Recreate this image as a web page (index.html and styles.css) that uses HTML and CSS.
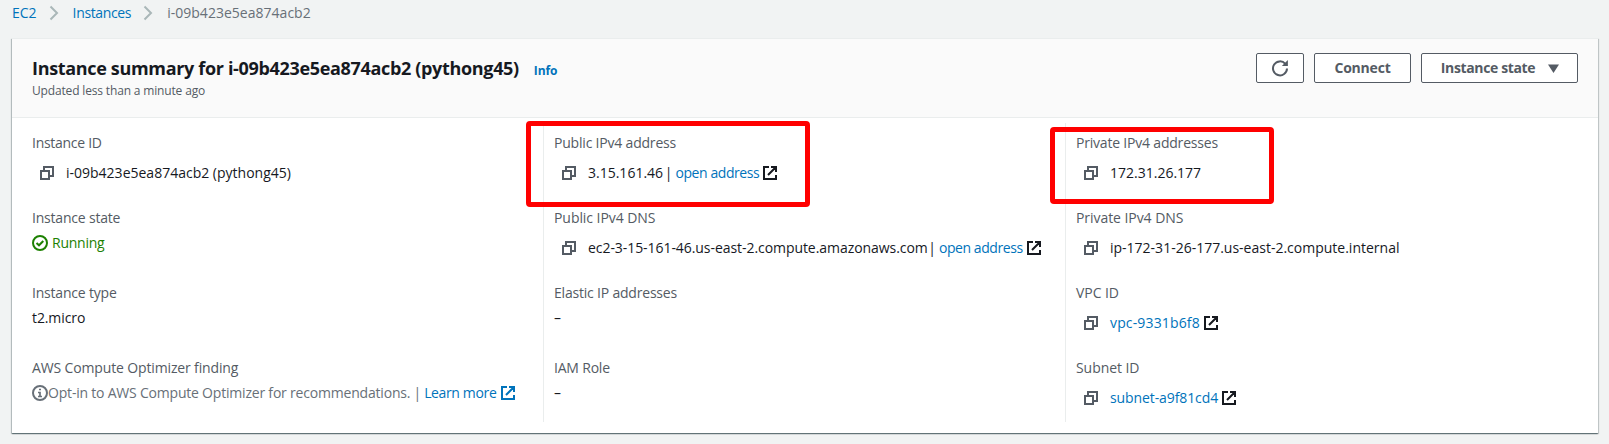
FILE: index.html
```html
<!DOCTYPE html>
<html lang="en">
<head>
<meta charset="utf-8">
<title>Instance summary</title>
<link rel="stylesheet" href="styles.css">
</head>
<body>
<svg class="defs" width="0" height="0" aria-hidden="true">
  <symbol id="copy" viewBox="0 0 14 14"><path d="M1 5h8v8H1zM4 5V1h9v9H9" fill="none" stroke="currentColor" stroke-width="2"/></symbol>
  <symbol id="ext" viewBox="0 0 14 14"><path d="M6 1H1v12h12V9M8 1h5v5M12.500 1.500L5 9" fill="none" stroke="currentColor" stroke-width="2"/></symbol>
  <symbol id="chev" viewBox="0 0 10 16"><path d="M1.500 1.500L8 8l-6.500 6.500" fill="none" stroke="currentColor" stroke-width="2"/></symbol>
</svg>
<nav class="crumbs">
  <a class="c1">EC2</a><svg class="chev"><use href="#chev"/></svg>
  <a class="c2">Instances</a><svg class="chev"><use href="#chev"/></svg>
  <span class="c3">i-09b423e5ea874acb2</span>
</nav>
<main class="card">
  <header class="head">
    <div class="heading">
      <div class="title-row"><h1>Instance summary for i-09b423e5ea874acb2 (pythong45)</h1><a class="info">Info</a></div>
      <p class="updated">Updated less than a minute ago</p>
    </div>
    <div class="actions">
      <button class="btn refresh" aria-label="Refresh"><svg width="18" height="18" viewBox="0 0 18 18" fill="none" stroke="currentColor" stroke-width="2"><path d="M16 9.500A7 7 0 1 1 14.300 4.800"/><path d="M16.900 1v6h-6z" fill="currentColor" stroke="none"/></svg></button>
      <button class="btn connect"><span>Connect</span></button>
      <button class="btn state"><span>Instance state</span><svg width="11" height="9" viewBox="0 0 11 9"><path d="M0 .5h11L5.500 9z" fill="currentColor"/></svg></button>
    </div>
  </header>
  <section class="grid">
    <div class="col">
      <div class="item"><div class="label tight">Instance ID</div><div class="value copyable"><svg class="copy"><use href="#copy"/></svg><span>i-09b423e5ea874acb2 (pythong45)</span></div></div>
      <div class="item"><div class="label">Instance state</div><div class="value running"><svg class="status" viewBox="0 0 16 16" fill="none" stroke="currentColor" stroke-width="2"><circle cx="8" cy="8" r="7"/><path d="M4.500 8l2.500 2.300L11.300 6"/></svg><span>Running</span></div></div>
      <div class="item"><div class="label">Instance type</div><div class="value"><span class="type">t2.micro</span></div></div>
      <div class="item"><div class="label finding">AWS Compute Optimizer finding</div><div class="value muted"><svg class="status" viewBox="0 0 16 16" fill="none" stroke="currentColor" stroke-width="2"><circle cx="8" cy="8" r="7"/><path d="M7 4.500h2M6 7.500h2v4M6 11.500h4" stroke-width="1.700"/></svg><span class="opt">Opt-in to AWS Compute Optimizer for recommendations. |</span><a class="learn">Learn more</a><svg class="ext blue"><use href="#ext"/></svg></div></div>
    </div>
    <div class="col">
      <div class="item"><div class="label">Public IPv4 address</div><div class="value copyable"><svg class="copy"><use href="#copy"/></svg><span class="ip">3.15.161.46 |</span><a class="open">open address</a><svg class="ext"><use href="#ext"/></svg></div></div>
      <div class="item"><div class="label loose">Public IPv4 DNS</div><div class="value copyable"><svg class="copy"><use href="#copy"/></svg><span class="dns">ec2-3-15-161-46.us-east-2.compute.amazonaws.com |</span><a class="open">open address</a><svg class="ext"><use href="#ext"/></svg></div></div>
      <div class="item"><div class="label">Elastic IP addresses</div><div class="value"><span>–</span></div></div>
      <div class="item"><div class="label">IAM Role</div><div class="value"><span>–</span></div></div>
      <div class="mark mark-public"></div>
    </div>
    <div class="col">
      <div class="item"><div class="label">Private IPv4 addresses</div><div class="value copyable"><svg class="copy"><use href="#copy"/></svg><span class="private">172.31.26.177</span></div></div>
      <div class="item"><div class="label loose">Private IPv4 DNS</div><div class="value copyable"><svg class="copy"><use href="#copy"/></svg><span class="pdns">ip-172-31-26-177.us-east-2.compute.internal</span></div></div>
      <div class="item"><div class="label loose">VPC ID</div><div class="value copyable"><svg class="copy"><use href="#copy"/></svg><a class="vpc">vpc-9331b6f8</a><svg class="ext"><use href="#ext"/></svg></div></div>
      <div class="item"><div class="label loose">Subnet ID</div><div class="value copyable"><svg class="copy"><use href="#copy"/></svg><a class="subnet">subnet-a9f81cd4</a><svg class="ext"><use href="#ext"/></svg></div></div>
      <div class="mark mark-private"></div>
    </div>
  </section>
</main>
</body>
</html>
```
FILE: styles.css
```css
* { box-sizing: border-box; }
body { margin: 0; height: 444px; overflow: hidden; background: #f1f3f3; color: #16191f; font: 14px/22px "Open Sans", "Noto Sans", sans-serif; }
a { color: #0073bb; text-decoration: none; }
svg { flex: none; }
.defs { position: absolute; }
.crumbs { display: flex; align-items: center; height: 26px; padding-left: 12px; color: #687078; }
.c2 { letter-spacing: -.36px; }
.c3 { letter-spacing: .02px; }
.chev { width: 10px; height: 16px; margin: 0 14px 0 12px; color: #aab7b8; }
.card { width: 1586px; height: 395px; margin: 12px 0 0 12px; background: #fff; border-top: 1px solid #eaeded; box-shadow: 0 1px 1px rgba(0,28,36,.4), 1px 1px 1px rgba(0,28,36,.15), -1px 1px 1px rgba(0,28,36,.2); }
.head { display: flex; justify-content: space-between; height: 79px; padding: 14px 20px 0 20px; background: #fafafa; border-bottom: 1px solid #eaeded; }
.heading { margin-top: -1px; }
.title-row { display: flex; align-items: baseline; height: 28px; gap: 15px; }
h1 { margin: 0; font-size: 18px; line-height: 32px; font-weight: 700; letter-spacing: -.33px; white-space: nowrap; }
.info { font-size: 12px; font-weight: 700; letter-spacing: -.1px; }
.updated { margin: 0; color: #545b64; font-size: 12px; letter-spacing: -.16px; }
.actions { display: flex; gap: 10px; }
.btn { display: flex; align-items: center; justify-content: center; height: 30px; padding: 0; background: #fff; border: 1px solid #545b64; border-radius: 2px; color: #545b64; font: 700 14px/22px "Open Sans", "Noto Sans", sans-serif; }
.refresh { width: 48px; }
.connect { width: 97px; letter-spacing: -.2px; }
.state { width: 157px; padding-left: 1px; gap: 13px; letter-spacing: -.37px; }
.grid { display: grid; grid-template-columns: 531px 522px 1fr; grid-template-rows: 299px; height: 299px; margin-top: 5px; }
.col { position: relative; padding: 9px 0 0 10px; border-left: 1px solid #eaeded; }
.col:first-child { padding-left: 20px; border-left: 0; }
.item { height: 75px; white-space: nowrap; }
.label { color: #545b64; letter-spacing: -.2px; }
.tight { letter-spacing: -.28px; }
.finding { letter-spacing: -.14px; }
.loose { letter-spacing: -.06px; }
.label, .value { width: max-content; }
.value { display: flex; align-items: center; height: 22px; margin-top: 3px; }
.copyable { height: 32px; padding-left: 8px; }
.copy { width: 14px; height: 14px; margin-right: 12px; color: #545b64; }
.ext { width: 14px; height: 14px; margin-left: 4px; }
.blue { color: #0073bb; margin-left: 5px; }
.status { width: 16px; height: 16px; }
.running { color: #1d8102; gap: 4px; letter-spacing: -.25px; }
.type { letter-spacing: -.1px; }
.muted { color: #687078; }
.opt { letter-spacing: -.19px; word-spacing: -.1px; }
.ip { word-spacing: -2px; }
.dns { letter-spacing: -.06px; word-spacing: -3px; }
.vpc { letter-spacing: .15px; }
.subnet { letter-spacing: -.1px; }
.open, .learn { margin-left: 3px; letter-spacing: -.42px; }
.learn { letter-spacing: -.36px; }
.mark { position: absolute; border: 5px solid #f00; border-radius: 4px; }
.mark-public { left: -18px; top: -2px; width: 284px; height: 86px; }
.mark-private { left: -16px; top: 4px; width: 224px; height: 77px; }
```
